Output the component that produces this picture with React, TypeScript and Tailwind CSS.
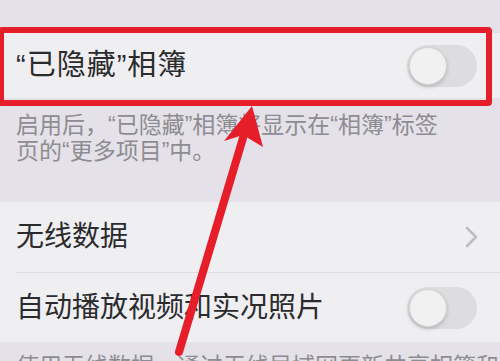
import React from 'react';

function Toggle() {
  return (
    <div className="w-[70px] h-[42px] rounded-full bg-[#dddcdf] p-[2px] flex items-center">
      <div className="w-[38px] h-[38px] rounded-full bg-[#f1f1f2] border border-[#d4d4d6] shadow-[0_2px_4px_rgba(0,0,0,0.18)]" />
    </div>
  );
}

function Chevron() {
  return (
    <svg width="14" height="22" viewBox="0 0 14 22" fill="none">
      <path d="M3 2l9 9-9 9" stroke="#bdbcc1" strokeWidth="2.6" strokeLinecap="round" strokeLinejoin="round" />
    </svg>
  );
}

export default function App() {
  return (
    <div
      className="relative w-[500px] h-[361px] overflow-hidden bg-[#e4e2e8]"
      style={{ fontFamily: '"Liberation Sans", "Noto Sans CJK SC", sans-serif' }}
    >
      <div className="h-[33px]" />

      {/* Hidden album toggle */}
      <div className="h-[65px] bg-[#efeef1] flex items-center justify-between pl-4 pr-[23px]">
        <span className="text-[29px] tracking-[1px] text-[#2b2b2d]">“已隐藏”相簿</span>
        <Toggle />
      </div>

      <div className="h-[104px] px-4 pt-[14px] text-[23px] leading-[26px] text-[#8d8c92]">
        启用后，“已隐藏”相簿将显示在“相簿”标签
        <br />
        页的“更多项目”中。
      </div>

      {/* Data section */}
      <div className="bg-[#efeef1] pl-4">
        <div className="h-[71px] flex items-center justify-between pr-[22px] border-b border-[#dcdbe0]">
          <span className="text-[28px] text-[#2b2b2d]">无线数据</span>
          <Chevron />
        </div>
        <div className="h-[69px] flex items-center justify-between pr-[23px]">
          <span className="text-[28px] text-[#2b2b2d]">自动播放视频和实况照片</span>
          <Toggle />
        </div>
      </div>

      <div className="px-4 pt-[11px] text-[23px] leading-[26px] text-[#8d8c92] whitespace-nowrap">
        使用无线数据，通过无线局域网更新共享相簿和iCloud照片。
      </div>

      {/* annotation: red highlight box */}
      <div className="absolute left-[-2px] top-[27px] w-[494px] h-[79px] border-[6px] border-[#e61e2a] rounded-[4px]" />

      {/* annotation: red arrow */}
      <svg className="absolute left-0 top-0" width="500" height="361" viewBox="0 0 500 361">
        <path d="M179 352L243 138" stroke="#e61e2a" strokeWidth="8" strokeLinecap="round" />
        <path d="M252 106L224 141L243 135L263 147Z" fill="#e61e2a" />
      </svg>
    </div>
  );
}
